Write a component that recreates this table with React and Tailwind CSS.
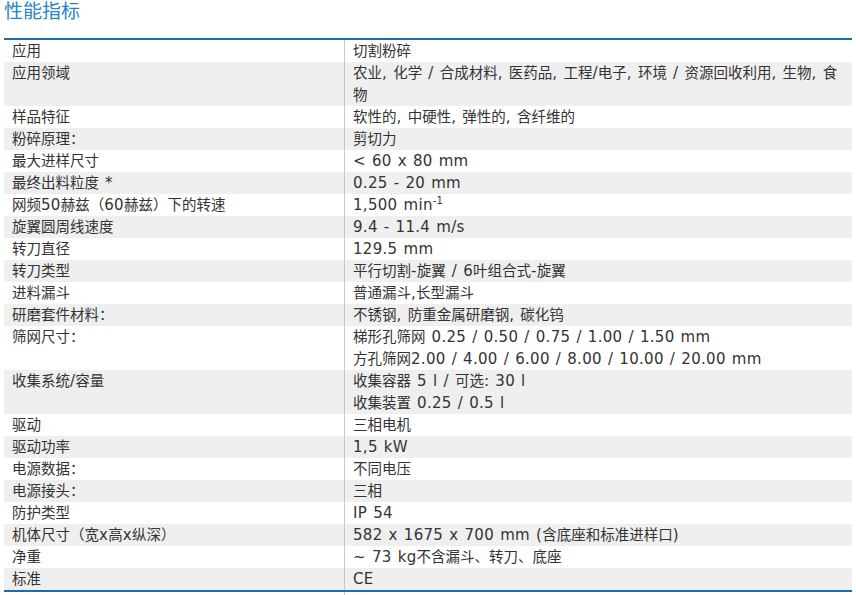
import React from 'react';

const CJK = /([\u3000-\u9fff\uff00-\uffef])/;

// CJK characters sit a little smaller than the Latin text, as on the original page
const Mixed = ({ text }) => {
  if (typeof text !== 'string') return text;
  return text.split(CJK).map((p, i) =>
    CJK.test(p) ? (
      <span key={i} className="text-[14.5px] tracking-normal">{p}</span>
    ) : (
      <React.Fragment key={i}>{p}</React.Fragment>
    )
  );
};

const rows = [
  ['应用', ['切割粉碎']],
  ['应用领域', ['农业, 化学 / 合成材料, 医药品, 工程/电子, 环境 / 资源回收利用, 生物, 食物']],
  ['样品特征', ['软性的, 中硬性, 弹性的, 含纤维的']],
  ['粉碎原理：', ['剪切力']],
  ['最大进样尺寸', ['< 60 x 80 mm']],
  ['最终出料粒度 *', ['0.25 - 20 mm']],
  ['网频50赫兹（60赫兹）下的转速', [<>1,500 min<sup className="text-[10px] -top-[6px]">-1</sup></>]],
  ['旋翼圆周线速度', ['9.4 - 11.4 m/s']],
  ['转刀直径', ['129.5 mm']],
  ['转刀类型', ['平行切割-旋翼 / 6叶组合式-旋翼']],
  ['进料漏斗', ['普通漏斗,长型漏斗']],
  ['研磨套件材料：', ['不锈钢, 防重金属研磨钢, 碳化钨']],
  ['筛网尺寸：', ['梯形孔筛网 0.25 / 0.50 / 0.75 / 1.00 / 1.50 mm', '方孔筛网2.00 / 4.00 / 6.00 / 8.00 / 10.00 / 20.00 mm']],
  ['收集系统/容量', ['收集容器 5 l / 可选: 30 l', '收集装置 0.25 / 0.5 l']],
  ['驱动', ['三相电机']],
  ['驱动功率', ['1,5 kW']],
  ['电源数据：', ['不同电压']],
  ['电源接头：', ['三相']],
  ['防护类型', ['IP 54']],
  ['机体尺寸（宽x高x纵深）', ['582 x 1675 x 700 mm (含底座和标准进样口)']],
  ['净重', ['~ 73 kg不含漏斗、转刀、底座']],
  ['标准', ['CE']],
];

export default function App() {
  return (
    <div className="w-[856px] h-[595px] bg-white overflow-hidden text-[#333] font-['DejaVu_Sans','Noto_Sans_CJK_SC',sans-serif]">
      <div className="px-1">
        <h2 className="h-[38px] text-[19px] leading-[22px] text-[#2585c8] font-normal">性能指标</h2>
        <div className="w-[848px] border-t-2 border-b-2 border-[#1a6eae]">
          {rows.map(([label, values], i) => (
            <div key={i} className={`grid grid-cols-[340px_1fr] text-[15px] leading-[22px] tracking-[0.3px] [word-spacing:1px] ${i % 2 === 1 ? 'bg-[#efefef]' : 'bg-white'}`}>
              <div className="pl-2"><Mixed text={label} /></div>
              <div className="pl-2 pr-[14px] border-l border-[#c8c8c8]">
                {values.map((v, j) => (
                  <div key={j}><Mixed text={v} /></div>
                ))}
              </div>
            </div>
          ))}
        </div>
        <div className="ml-[340px] h-2 border-l border-[#c8c8c8]" />
      </div>
    </div>
  );
}
